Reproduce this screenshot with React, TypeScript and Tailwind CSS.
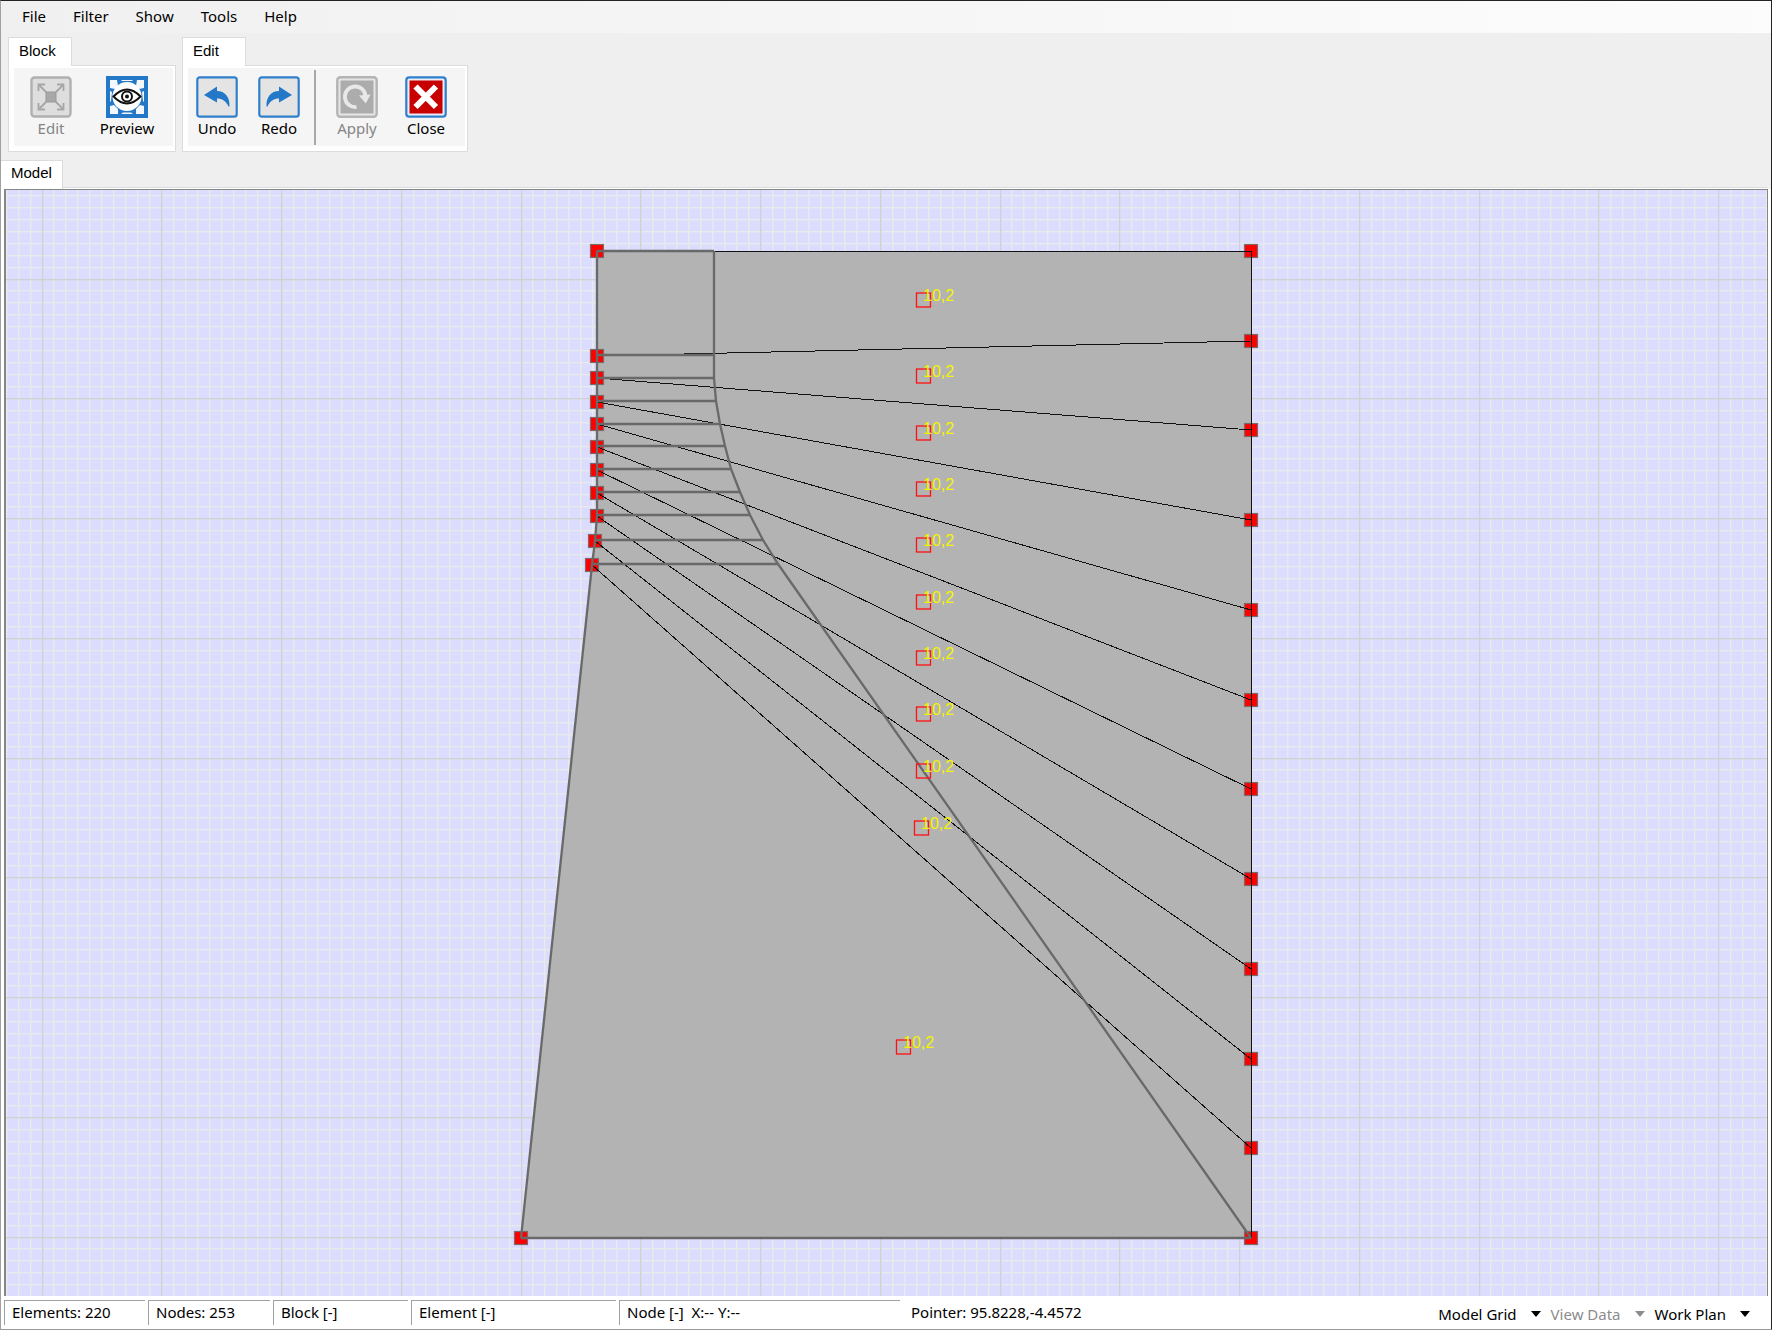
import React, { useState } from 'react';

interface Point {
  x: number;
  y: number;
}

const RIGHT_X = 1245;
const TOP_Y = 61;
const BOTTOM_Y = 1048;

const leftNodes: Point[] = [
  { x: 591, y: 61 },
  { x: 591, y: 166 },
  { x: 591, y: 188 },
  { x: 591, y: 212 },
  { x: 591, y: 234 },
  { x: 591, y: 257 },
  { x: 591, y: 280 },
  { x: 591, y: 303 },
  { x: 591, y: 326 },
  { x: 589, y: 351 },
  { x: 586, y: 375 },
  { x: 515, y: 1048 },
];

const rightNodes: Point[] = leftNodes.map((_, i) => ({
  x: RIGHT_X,
  y: Math.round(TOP_Y + (i * (BOTTOM_Y - TOP_Y)) / 11),
}));

// downstream face of the wall, one point per layer
const face: Point[] = [
  { x: 708, y: 61 },
  { x: 708, y: 165 },
  { x: 708, y: 188 },
  { x: 710, y: 211 },
  { x: 714, y: 234 },
  { x: 719, y: 256 },
  { x: 725, y: 279 },
  { x: 734, y: 302 },
  { x: 744, y: 325 },
  { x: 757, y: 350 },
  { x: 772, y: 374 },
  { x: 1245, y: 1048 },
];

const blocks: Point[] = leftNodes.slice(1).map((p, i) => ({
  x: Math.round((leftNodes[i].x + p.x + 2 * RIGHT_X) / 4) - 1,
  y: Math.round((leftNodes[i].y + p.y + rightNodes[i].y + rightNodes[i + 1].y) / 4),
}));

const toPoints = (points: Point[]) => points.map((p) => `${p.x},${p.y}`).join(' ');

const GRID_STEP = 11.975;
const gridIndexes = Array.from({ length: 360 }, (_, i) => i);

const GridLines = () => {
  const isMajorCol = (i: number) => i % 10 === 3;
  const isMajorRow = (i: number) => i % 10 === 7;
  const col = (i: number) => Math.floor(36 + (i - 3) * GRID_STEP);
  const row = (i: number) => Math.floor(89 + (i - 7) * GRID_STEP);

  return (
    <g>
      {gridIndexes.map((i) => (
        <React.Fragment key={i}>
          <rect x={col(i)} y="0" width="1.4" height="100%" fill="#e8ebea" />
          <rect x="0" y={row(i)} width="100%" height="1.4" fill="#e8ebea" />
        </React.Fragment>
      ))}
      {gridIndexes.filter(isMajorCol).map((i) => (
        <rect key={i} x={col(i)} y="0" width="1.4" height="100%" fill="#d0d1d4" />
      ))}
      {gridIndexes.filter(isMajorRow).map((i) => (
        <rect key={i} x="0" y={row(i)} width="100%" height="1.4" fill="#d0d1d4" />
      ))}
    </g>
  );
};

const ModelView = () => (
  <svg className="block h-full w-full" role="img" aria-label="Model">
    <GridLines />
    <polygon points={toPoints([...leftNodes, ...[...rightNodes].reverse()])} fill="#b3b3b3" />

    {[...leftNodes, ...rightNodes].map((p, i) => (
      <rect
        key={i}
        x={p.x - 6.5}
        y={p.y - 6.5}
        width="13"
        height="13"
        fill="#ff0000"
        stroke="#7a6a6a"
        strokeWidth="1.2"
      />
    ))}

    <g stroke="#111111" strokeWidth="1" fill="none" shapeRendering="crispEdges">
      {leftNodes.map((p, i) => (
        <line key={i} x1={p.x} y1={p.y} x2={rightNodes[i].x} y2={rightNodes[i].y} />
      ))}
      <line x1={RIGHT_X} y1={TOP_Y} x2={RIGHT_X} y2={BOTTOM_Y} />
    </g>

    <g stroke="#696969" strokeWidth="2.3" fill="none">
      <polyline points={toPoints(leftNodes)} />
      <polyline points={toPoints(face)} />
      {face.slice(0, 11).map((p, i) => (
        <line key={i} x1={leftNodes[i].x} y1={p.y} x2={p.x} y2={p.y} />
      ))}
      <line x1={515} y1={BOTTOM_Y} x2={RIGHT_X} y2={BOTTOM_Y} />
    </g>

    {blocks.map((p, i) => (
      <g key={i}>
        <rect
          x={p.x - 6.5}
          y={p.y - 7}
          width="14"
          height="14"
          fill="none"
          stroke="#ff1010"
          strokeWidth="1.3"
        />
        <text x={p.x} y={p.y + 1} fontSize="16" fill="#f4f400" fontFamily="Liberation Sans, sans-serif">
          10,2
        </text>
      </g>
    ))}
  </svg>
);

const EditIcon = () => (
  <svg viewBox="0 0 42 42" className="size-[42px]">
    <rect x="1.5" y="1.5" width="39" height="39" rx="3" fill="#dedede" stroke="#b0b0b0" strokeWidth="2.4" />
    <g stroke="#a6a6a6" strokeWidth="1.8" fill="none">
      <path d="M9 9 L16 16 M33 9 L26 16 M9 33 L16 26 M33 33 L26 26" />
      <path d="M8.5 15 V8.5 H15 M27 8.5 H33.5 V15 M8.5 27 V33.5 H15 M27 33.5 H33.5 V27" />
    </g>
    <rect x="16" y="16" width="10" height="10" fill="#a8a8a8" stroke="#999999" />
  </svg>
);

const PreviewIcon = () => (
  <svg viewBox="0 0 42 42" className="size-[42px]">
    <rect width="42" height="42" fill="#2478c8" />
    <g fill="#f4f8fc">
      <path d="M4 4 H11 L12 10 L9 13 L4 12 Z M38 4 H31 L30 10 L33 13 L38 12 Z" />
      <path d="M4 38 H12 V33 L8 29 L4 30 Z M38 38 H30 V33 L34 29 L38 30 Z" />
      <path d="M15 4 H27 L26 5 H16 Z M15 38 H27 L25 36.5 H17 Z" />
      <path d="M4 15 L6 16 L5 25 L4 26 Z M38 15 L36 16 L37 25 L38 26 Z" />
    </g>
    <circle cx="21" cy="20.5" r="14.5" fill="#ffffff" />
    <path d="M7.5 20.5 Q21 6.5 34.5 20.5 Q21 34.5 7.5 20.5 Z" fill="#ffffff" stroke="#111111" strokeWidth="2" />
    <circle cx="21" cy="20.5" r="5" fill="#ffffff" stroke="#111111" strokeWidth="2" />
    <circle cx="21" cy="20.5" r="2" fill="#111111" />
  </svg>
);

const ArrowIcon = ({ flipped = false }: { flipped?: boolean }) => (
  <svg viewBox="0 0 42 42" className="size-[42px]">
    <rect x="1.3" y="1.3" width="39.4" height="39.4" rx="2.5" fill="#e4e4e4" stroke="#2f80cc" strokeWidth="2.2" />
    <path
      d="M8 19 L21 10.5 V15 C29 15 34 21 33.5 30.5 H32.5 C30 25 26 22.5 21 22.5 V26.5 Z"
      fill="#2478c8"
      transform={flipped ? 'translate(42 0) scale(-1 1)' : undefined}
    />
  </svg>
);

const ApplyIcon = () => (
  <svg viewBox="0 0 42 42" className="size-[42px]">
    <rect x="1.3" y="1.3" width="39.4" height="39.4" rx="3" fill="#e6e6e6" stroke="#b4b4b4" strokeWidth="2.4" />
    <rect x="4.5" y="4.5" width="33" height="33" fill="#acacac" />
    <path d="M20.5 31 A10.3 10.3 0 1 1 29.5 20.5" fill="none" stroke="#e8e8e8" strokeWidth="3.8" />
    <path d="M23 19.5 L34.5 18.5 L29.8 27.5 Z" fill="#e8e8e8" />
  </svg>
);

const CloseIcon = () => (
  <svg viewBox="0 0 42 42" className="size-[42px]">
    <rect x="1.3" y="1.3" width="39.4" height="39.4" rx="3" fill="#ececf6" stroke="#2f80cc" strokeWidth="2.2" />
    <rect x="4.5" y="4.5" width="33" height="33" fill="#c80000" />
    <path d="M10.5 10.5 L31 31 M31 10.5 L10.5 31" stroke="#ffffff" strokeWidth="6" />
  </svg>
);

interface ToolButtonProps {
  label: string;
  icon: React.ReactNode;
  disabled?: boolean;
  className?: string;
}

const ToolButton = ({ label, icon, disabled, className = 'w-[50px]' }: ToolButtonProps) => (
  <button
    type="button"
    disabled={disabled}
    className={`flex flex-col items-center pt-2 text-[15px] leading-5 text-black disabled:text-[#858585] ${className}`}
  >
    {icon}
    <span>{label}</span>
  </button>
);

const ToolGroup = ({ title, children }: { title: string; children: React.ReactNode }) => (
  <section className="flex flex-col items-start" aria-label={title}>
    <h2 className="relative z-10 -mb-px h-[29px] w-16 border border-b-0 border-[#dcdcdc] bg-white pl-[10px] font-[Liberation_Sans,sans-serif] text-[15px] leading-[25px]">
      {title}
    </h2>
    <div className="border border-[#dcdcdc] bg-white pt-[2px] pr-[2px] pb-[5px] pl-[5px]">
      <div className="flex h-[78px] items-stretch bg-[#f5f5f5]">{children}</div>
    </div>
  </section>
);

const statusCells = [
  { text: 'Elements: 220', width: 'w-[141px]' },
  { text: 'Nodes: 253', width: 'w-[122px]' },
  { text: 'Block [-]', width: 'w-[135px]' },
  { text: 'Element [-]', width: 'w-[205px]' },
  { text: 'Node [-]  X:-- Y:--', width: 'w-[281px]' },
];

const DropButton = ({ label, disabled }: { label: string; disabled?: boolean }) => (
  <button
    type="button"
    disabled={disabled}
    aria-haspopup="menu"
    className="flex items-center gap-[14px] text-black disabled:text-[#8c8c8c]"
  >
    {label}
    <svg viewBox="0 0 10 6" className="h-[6px] w-[10px]" fill="currentColor">
      <path d="M0 0 H10 L5 6 Z" />
    </svg>
  </button>
);

const App: React.FC = () => {
  const [openMenu, setOpenMenu] = useState<string | null>(null);

  return (
    <div className="flex min-h-screen flex-col border border-t-[#222222] border-r-[#222222] border-b-[#9a9a9a] border-l-[#a0a0a0] bg-[#efefef] font-[Noto_Sans,sans-serif] text-[15px] text-black">
      <nav className="flex h-8 items-center gap-[27px] bg-linear-to-r from-[#f0f0f0] to-[#fcfcfc] pb-[2px] pl-[21px]">
        {['File', 'Filter', 'Show', 'Tools', 'Help'].map((name) => (
          <button
            key={name}
            type="button"
            aria-expanded={openMenu === name}
            onClick={() => setOpenMenu(openMenu === name ? null : name)}
          >
            {name}
          </button>
        ))}
      </nav>

      <div className="flex items-start gap-[6px] pt-1 pl-[7px]">
        <ToolGroup title="Block">
          <div className="flex gap-[18px] pr-[13px] pl-3">
            <ToolButton label="Edit" icon={<EditIcon />} disabled />
            <ToolButton label="Preview" icon={<PreviewIcon />} className="w-[66px]" />
          </div>
        </ToolGroup>
        <ToolGroup title="Edit">
          <div className="flex gap-3 pl-1">
            <ToolButton label="Undo" icon={<ArrowIcon />} />
            <ToolButton label="Redo" icon={<ArrowIcon flipped />} />
          </div>
          <div className="mt-[2px] mr-4 ml-[10px] h-[75px] w-[2px] bg-[#a8a8a8]" />
          <div className="flex gap-[19px] pr-[14px]">
            <ToolButton label="Apply" icon={<ApplyIcon />} disabled />
            <ToolButton label="Close" icon={<CloseIcon />} />
          </div>
        </ToolGroup>
      </div>

      <div className="mt-2 flex items-end pr-1">
        <h2 className="h-[29px] w-[62px] border-t border-r border-[#dcdcdc] bg-white pl-[10px] font-[Liberation_Sans,sans-serif] text-[15px] leading-[23px]">
          Model
        </h2>
        <div className="h-[2px] flex-1 border-t border-[#dcdcdc] bg-white" />
      </div>

      <main className="flex flex-1 flex-col bg-white pr-[3px] pl-[3px]">
        <div className="relative flex-1 overflow-hidden border-2 border-t border-r border-b-0 border-[#868686] bg-[#dcdcff]">
          <div className="absolute inset-0">
            <ModelView />
          </div>
        </div>
      </main>

      <footer className="flex h-[33px] items-start bg-white pt-1 pl-[3px]">
        <div className="flex gap-[3px]">
          {statusCells.map((cell) => (
            <div
              key={cell.text}
              className={`h-[25px] border-t border-l border-[#a0a0a0] pl-[7px] leading-[23px] whitespace-pre ${cell.width}`}
            >
              {cell.text}
            </div>
          ))}
          <div className="pl-2 leading-[25px]">Pointer: 95.8228,-4.4572</div>
        </div>
        <div className="ml-auto flex h-[28px] items-center gap-[10px] pr-[21px]">
          <DropButton label="Model Grid" />
          <DropButton label="View Data" disabled />
          <DropButton label="Work Plan" />
        </div>
      </footer>
    </div>
  );
};

export default App;
